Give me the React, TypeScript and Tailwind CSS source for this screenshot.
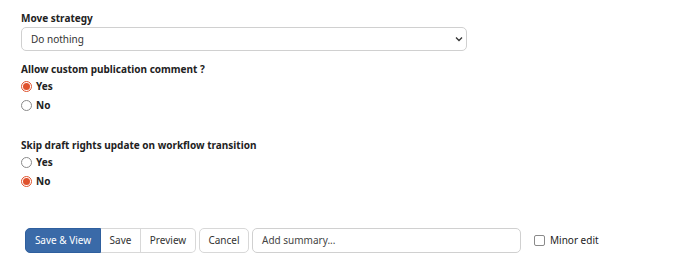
import React from "react";

function Radio({ checked }: { checked: boolean }) {
  return checked ? (
    <span className="inline-flex h-[11px] w-[11px] items-center justify-center rounded-full border border-[#e0522d] bg-white">
      <span className="h-[7px] w-[7px] rounded-full bg-[#e0522d]" />
    </span>
  ) : (
    <span className="inline-block h-[11px] w-[11px] rounded-full border border-[#8a8a8a] bg-white" />
  );
}

function Option({ label, checked }: { label: string; checked: boolean }) {
  return (
    <div className="flex h-[19px] items-center gap-[4px]">
      <Radio checked={checked} />
      <span className="text-[10px] font-bold text-[#222]">{label}</span>
    </div>
  );
}

export default function App() {
  return (
    <div
      className="h-[263px] w-[690px] bg-white text-[#222]"
      style={{ fontFamily: '"Noto Sans", "Open Sans", sans-serif' }}
    >
      <div className="pl-[21px] pt-[11px]">
        <div className="text-[10px] font-bold leading-[15px]">Move strategy</div>
        <div className="mt-[1px] flex h-[24px] w-[446px] items-center justify-between rounded-[5px] border border-[#d0d0d0] pl-[9px] pr-[3px]">
          <span className="text-[10px] text-[#333]">Do nothing</span>
          <svg width="8" height="6" viewBox="0 0 8 6" fill="none">
            <path d="M1 1.5 L4 4.5 L7 1.5" stroke="#333" strokeWidth="1.3" />
          </svg>
        </div>
        <div className="mt-[11px] text-[10px] font-bold leading-[15px]">
          Allow custom publication comment ?
        </div>
        <Option label="Yes" checked={true} />
        <Option label="No" checked={false} />
        <div className="mt-[23px] text-[10px] font-bold leading-[15px]">
          Skip draft rights update on workflow transition
        </div>
        <Option label="Yes" checked={false} />
        <Option label="No" checked={true} />
      </div>
      <div className="mt-[37px] flex items-center pl-[25px]">
        <div className="flex h-[25px] text-[10px]">
          <button className="w-[76px] rounded-l-[5px] border border-[#2f5f9e] bg-[#3a6aa8] text-white">
            Save &amp; View
          </button>
          <button className="w-[40px] border-y border-r border-[#d8d8d8] text-[#333]">Save</button>
          <button className="w-[55px] rounded-r-[5px] border-y border-r border-[#d8d8d8] text-[#333]">
            Preview
          </button>
        </div>
        <button className="ml-[3px] h-[25px] w-[50px] rounded-[5px] border border-[#d8d8d8] text-[10px] text-[#333]">
          Cancel
        </button>
        <div className="ml-[3px] flex h-[25px] w-[269px] items-center rounded-[5px] border border-[#d0d0d0] px-[9px] text-[10px] text-[#444]">
          Add summary...
        </div>
        <label className="ml-[13px] flex items-center gap-[5px]">
          <span className="inline-block h-[11px] w-[11px] rounded-[2px] border border-[#8a8a8a]" />
          <span className="text-[10px] text-[#222]">Minor edit</span>
        </label>
      </div>
    </div>
  );
}
